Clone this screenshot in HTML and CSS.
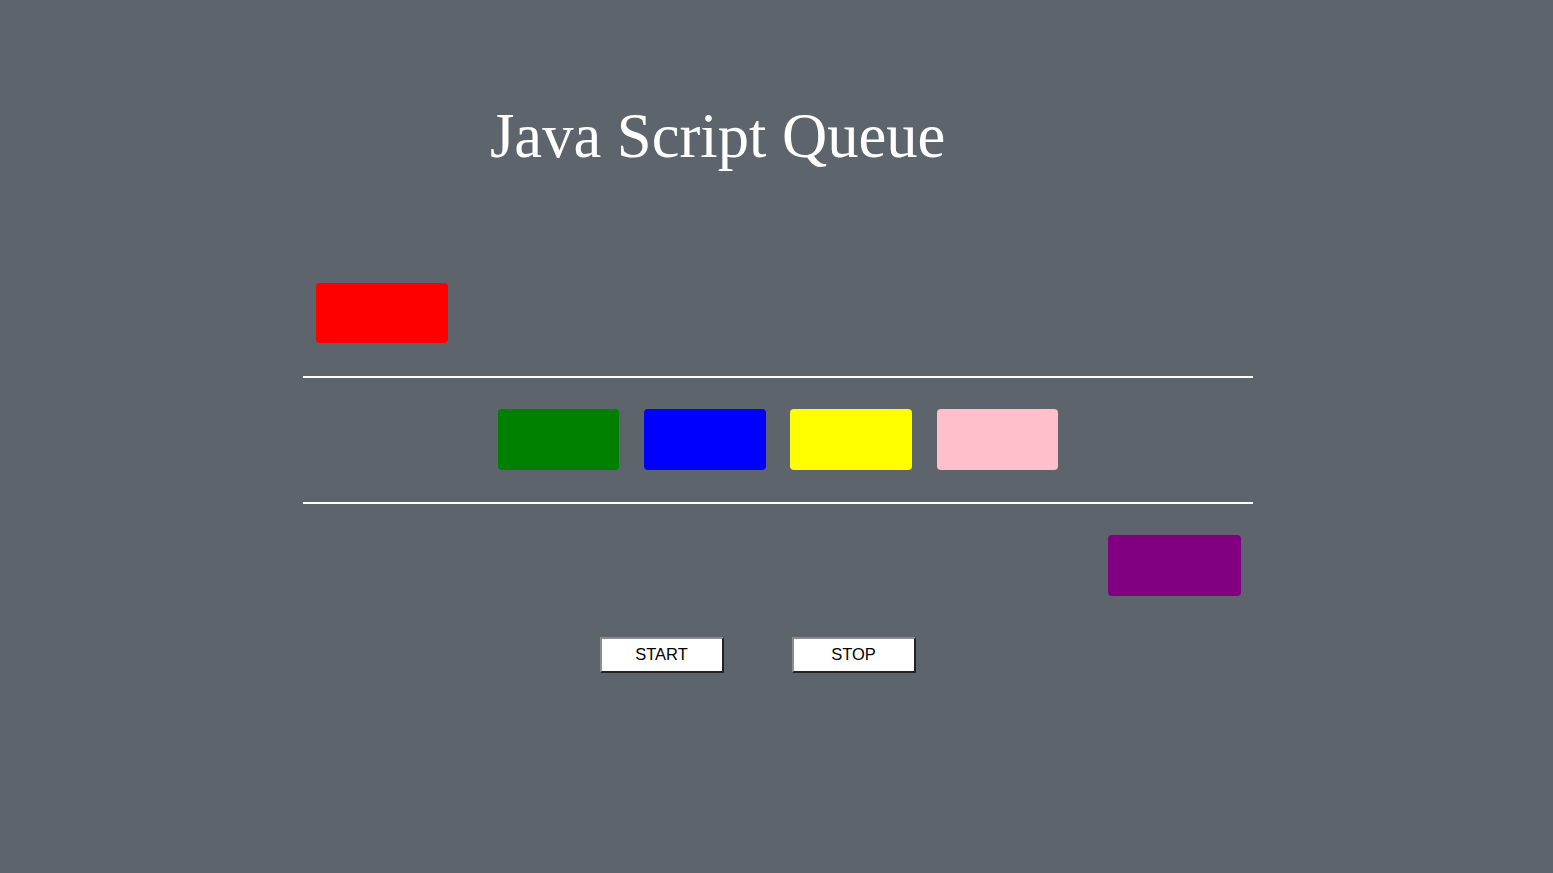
FILE: index.html
```html
<!DOCTYPE html>
<html>
<head>
<meta charset="utf-8">
<title>Java Script Queue</title>
<link rel="stylesheet" href="styles.css">
</head>
<body>
<div class="page">
  <h1 class="title">Java Script Queue</h1>
  <div class="lane lane-top">
    <div class="box red"></div>
  </div>
  <div class="lane lane-queue">
    <div class="box small green"></div>
    <div class="box small blue"></div>
    <div class="box small yellow"></div>
    <div class="box small pink"></div>
  </div>
  <div class="lane lane-bottom">
    <div class="box purple"></div>
  </div>
  <div class="controls">
    <button class="btn">START</button>
    <button class="btn">STOP</button>
  </div>
</div>
</body>
</html>
```

FILE: styles.css
```css
html, body {
  margin: 0;
  padding: 0;
  background: #5e646c;
  height: 100%;
}
.page {
  width: 950px;
  margin-left: 303px;
}
.title {
  margin: 0;
  padding: 101px 0 0 187px;
  font-family: "Liberation Serif", "Times New Roman", serif;
  font-weight: normal;
  font-size: 62.6px;
  line-height: 70px;
  color: #ffffff;
  height: 71px;
}
.lane-top {
  height: 204px;
  display: flex;
  align-items: flex-end;
  padding-left: 13px;
  padding-bottom: 33px;
  box-sizing: border-box;
}
.lane-queue {
  border-top: 2px solid #ffffff;
  border-bottom: 2px solid #ffffff;
  display: flex;
  justify-content: center;
  align-items: flex-start;
  gap: 24.8px;
  padding-top: 31px;
  height: 93px;
}
.lane-bottom {
  display: flex;
  justify-content: flex-end;
  padding: 31px 12px 0 0;
  height: 61px;
}
.box {
  width: 132px;
  height: 60px;
  border-radius: 4px;
}
.box.small {
  width: 121.5px;
  height: 60.5px;
}
.box.purple {
  width: 133px;
  height: 61px;
}
.red { background: #ff0000; }
.green { background: #008000; }
.blue { background: #0000ff; }
.yellow { background: #ffff00; }
.pink { background: #ffc0cb; }
.purple { background: #800080; }
.controls {
  display: flex;
  gap: 68px;
  padding: 41px 0 0 296.5px;
}
.btn {
  width: 124px;
  height: 35.5px;
  margin: 0;
  padding: 0;
  background: #ffffff;
  color: #000000;
  font-family: "Liberation Sans", Arial, sans-serif;
  font-size: 16.5px;
  border-style: solid;
  border-width: 2px;
  border-color: #8a8e94 #222222 #222222 #8a8e94;
}
```
